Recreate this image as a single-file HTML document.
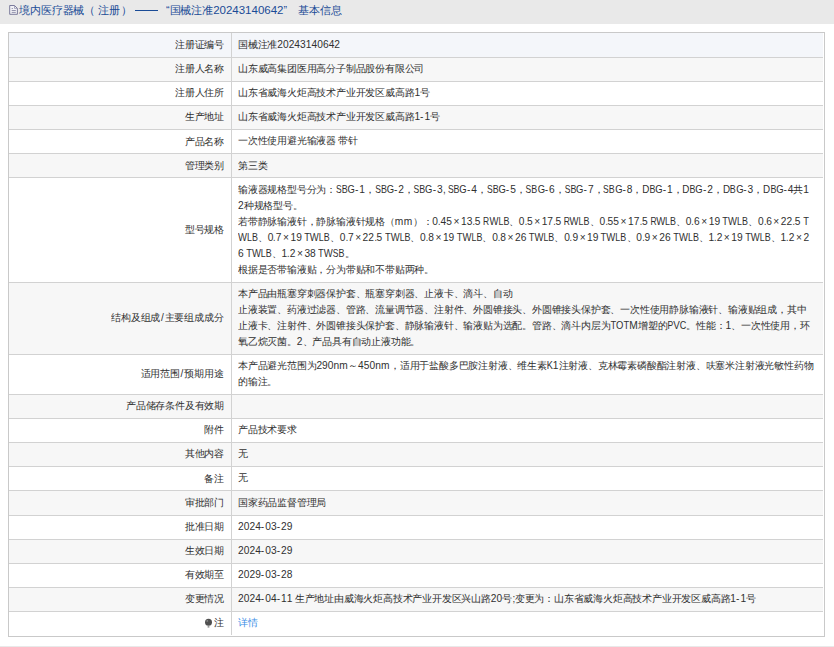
<!DOCTYPE html>
<html><head><meta charset="utf-8"><style>
html,body{margin:0;padding:0;background:#fff;width:834px;height:647px;overflow:hidden;position:relative}
body{font-family:"Liberation Sans",sans-serif;color:#303030}
.hdr{position:absolute;left:0;top:0;width:834px;height:23.5px;background:#e9e9e9}
.ftr{position:absolute;left:0;top:645.8px;width:834px;height:2px;background:#e9e9e9}
.title{position:absolute;top:1px;font-size:12.7px;line-height:23.853px;color:#1a4b96;white-space:nowrap;transform:scale(0.83846);transform-origin:0 0}
.ha{font-size:13.716px}
.doc{position:absolute;left:0;top:0}
.row{position:absolute;left:8.5px;width:814.7px}
.hl{position:absolute;left:8.5px;width:814.7px;height:1px;background:#d2d2d2}
.frame{position:absolute;left:8.0px;top:31.9px;width:814.5px;height:603.1px;border:1px solid #c9c9c9}
.vl{position:absolute;left:231.0px;top:32.4px;width:1px;height:603.1px;background:#d2d2d2}
.lab{position:absolute;right:610.2px;font-size:12.7px;letter-spacing:-1px;line-height:19.763px;white-space:nowrap;color:#303030;transform:scale(0.81667);transform-origin:100% 0}
.val{position:absolute;left:238.3px;font-size:12.7px;letter-spacing:-1px;line-height:19.763px;white-space:nowrap;color:#303030;transform:scale(0.81667);transform-origin:0 0}
.link{color:#3a8ee6}
.a{font-size:12.490px;letter-spacing:0.269px}
.u{font-size:12.490px;letter-spacing:-0.490px}
.l{font-size:12.612px;letter-spacing:0}
.w{letter-spacing:-1.347px}
.x{margin:0 0.918px}
.sl{font-size:12.490px;letter-spacing:0;margin:0 0.980px}
i{font-style:normal;display:inline-block;transform-origin:0 50%;font-size:12.490px;letter-spacing:0;overflow:visible}
.bulb{vertical-align:-1px;margin-right:0.5px}
</style></head><body>
<div class="hdr"></div>
<svg class="doc" width="30" height="24" viewBox="0 0 30 24"><path d="M9.7 5.5H14.5L17.4 8.4V14.3H9.7Z" fill="#f2f2f6" stroke="#6e6e92" stroke-width="0.9"/><path d="M14.5 5.5V8.4H17.4" fill="none" stroke="#8a8aa8" stroke-width="0.7"/><path d="M11.7 8.5H12.9M11.7 10.5H15.8M11.7 12.4H15.8" stroke="#7c7c9c" stroke-width="0.8"/></svg>
<div class="title" style="left:19.1px">境内医疗器械</div><div class="title" style="left:83.8px">（</div><div class="title" style="left:97.6px">注册</div><div class="title" style="left:121.4px">）</div><div style="position:absolute;left:134.6px;top:10px;width:23.8px;height:1.3px;background:#1a4b96"></div><div class="title" style="left:165.8px">“国械注准<span class="ha">20243140642</span>”</div><div class="title" style="left:298px">基本信息</div>
<div class="row" style="top:32.40px;height:24.80px;background:#f4f6fa"></div><div class="lab" style="top:36.73px">注册证编号</div><div class="val" style="top:36.63px">国械注准<i style="width:7px">2</i><i style="width:7px">0</i><i style="width:7px">2</i><i style="width:7px">4</i><i style="width:7px">3</i><i style="width:7px">1</i><i style="width:7px">4</i><i style="width:7px">0</i><i style="width:7px">6</i><i style="width:7px">4</i><i style="width:7px">2</i></div><div class="row" style="top:57.20px;height:24.20px;background:#f7f7f7"></div><div class="lab" style="top:61.23px">注册人名称</div><div class="val" style="top:61.13px">山东威高集团医用高分子制品股份有限公司</div><div class="row" style="top:81.40px;height:24.00px;background:#ffffff"></div><div class="lab" style="top:85.33px">注册人住所</div><div class="val" style="top:85.23px">山东省威海火炬高技术产业开发区威高路<i style="width:7px">1</i>号</div><div class="row" style="top:105.40px;height:24.10px;background:#f7f7f7"></div><div class="lab" style="top:109.38px">生产地址</div><div class="val" style="top:109.28px">山东省威海火炬高技术产业开发区威高路<i style="width:7px">1</i><i style="width:5.3px">-</i><i style="width:7px">1</i>号</div><div class="row" style="top:129.50px;height:24.20px;background:#ffffff"></div><div class="lab" style="top:133.53px">产品名称</div><div class="val" style="top:133.43px">一次性使用避光输液器<i style="width:3px;transform:scaleX(0.864)">&nbsp;</i>带针</div><div class="row" style="top:153.70px;height:24.00px;background:#f7f7f7"></div><div class="lab" style="top:157.63px">管理类别</div><div class="val" style="top:157.53px">第三类</div><div class="row" style="top:177.70px;height:104.90px;background:#ffffff"></div><div class="lab" style="top:222.08px">型号规格</div><div class="val" style="top:181.63px">输液器规格型号分为：<i style="width:7px;transform:scaleX(0.840)">S</i><i style="width:7.3px;transform:scaleX(0.876)">B</i><i style="width:9px;transform:scaleX(0.926)">G</i><i style="width:5.3px">-</i><i style="width:7px">1</i>，<i style="width:7px;transform:scaleX(0.840)">S</i><i style="width:7.3px;transform:scaleX(0.876)">B</i><i style="width:9px;transform:scaleX(0.926)">G</i><i style="width:5.3px">-</i><i style="width:7px">2</i>，<i style="width:7px;transform:scaleX(0.840)">S</i><i style="width:7.3px;transform:scaleX(0.876)">B</i><i style="width:9px;transform:scaleX(0.926)">G</i><i style="width:5.3px">-</i><i style="width:7px">3</i><i style="width:3.3px;transform:scaleX(0.950)">,</i><i style="width:3px;transform:scaleX(0.864)">&nbsp;</i><i style="width:7px;transform:scaleX(0.840)">S</i><i style="width:7.3px;transform:scaleX(0.876)">B</i><i style="width:9px;transform:scaleX(0.926)">G</i><i style="width:5.3px">-</i><i style="width:7px">4</i>，<i style="width:7px;transform:scaleX(0.840)">S</i><i style="width:7.3px;transform:scaleX(0.876)">B</i><i style="width:9px;transform:scaleX(0.926)">G</i><i style="width:5.3px">-</i><i style="width:7px">5</i>，<i style="width:7px;transform:scaleX(0.840)">S</i><i style="width:7.3px;transform:scaleX(0.876)">B</i><i style="width:9px;transform:scaleX(0.926)">G</i><i style="width:5.3px">-</i><i style="width:7px">6</i>，<i style="width:7px;transform:scaleX(0.840)">S</i><i style="width:7.3px;transform:scaleX(0.876)">B</i><i style="width:9px;transform:scaleX(0.926)">G</i><i style="width:5.3px">-</i><i style="width:7px">7</i>，<i style="width:7px;transform:scaleX(0.840)">S</i><i style="width:7.3px;transform:scaleX(0.876)">B</i><i style="width:9px;transform:scaleX(0.926)">G</i><i style="width:5.3px">-</i><i style="width:7px">8</i>，<i style="width:8.7px;transform:scaleX(0.965)">D</i><i style="width:7.3px;transform:scaleX(0.876)">B</i><i style="width:9px;transform:scaleX(0.926)">G</i><i style="width:5.3px">-</i><i style="width:7px">1</i>，<i style="width:8.7px;transform:scaleX(0.965)">D</i><i style="width:7.3px;transform:scaleX(0.876)">B</i><i style="width:9px;transform:scaleX(0.926)">G</i><i style="width:5.3px">-</i><i style="width:7px">2</i>，<i style="width:8.7px;transform:scaleX(0.965)">D</i><i style="width:7.3px;transform:scaleX(0.876)">B</i><i style="width:9px;transform:scaleX(0.926)">G</i><i style="width:5.3px">-</i><i style="width:7px">3</i>，<i style="width:8.7px;transform:scaleX(0.965)">D</i><i style="width:7.3px;transform:scaleX(0.876)">B</i><i style="width:9px;transform:scaleX(0.926)">G</i><i style="width:5.3px">-</i><i style="width:7px">4</i>共<i style="width:7px">1</i></div><div class="val" style="top:197.77px"><i style="width:7px">2</i>种规格型号。</div><div class="val" style="top:213.91px">若带静脉输液针，静脉输液针规格（<i style="width:11px">m</i><i style="width:11px">m</i>）：<i style="width:7px">0</i><i style="width:3px;transform:scaleX(0.864)">.</i><i style="width:7px">4</i><i style="width:7px">5</i><i style="width:11px;text-align:center">×</i><i style="width:7px">1</i><i style="width:7px">3</i><i style="width:3px;transform:scaleX(0.864)">.</i><i style="width:7px">5</i><i style="width:3px;transform:scaleX(0.864)">&nbsp;</i><i style="width:7.5px;transform:scaleX(0.832)">R</i><i style="width:11px;transform:scaleX(0.933)">W</i><i style="width:6px;transform:scaleX(0.864)">L</i><i style="width:7.3px;transform:scaleX(0.876)">B</i>、<i style="width:7px">0</i><i style="width:3px;transform:scaleX(0.864)">.</i><i style="width:7px">5</i><i style="width:11px;text-align:center">×</i><i style="width:7px">1</i><i style="width:7px">7</i><i style="width:3px;transform:scaleX(0.864)">.</i><i style="width:7px">5</i><i style="width:3px;transform:scaleX(0.864)">&nbsp;</i><i style="width:7.5px;transform:scaleX(0.832)">R</i><i style="width:11px;transform:scaleX(0.933)">W</i><i style="width:6px;transform:scaleX(0.864)">L</i><i style="width:7.3px;transform:scaleX(0.876)">B</i>、<i style="width:7px">0</i><i style="width:3px;transform:scaleX(0.864)">.</i><i style="width:7px">5</i><i style="width:7px">5</i><i style="width:11px;text-align:center">×</i><i style="width:7px">1</i><i style="width:7px">7</i><i style="width:3px;transform:scaleX(0.864)">.</i><i style="width:7px">5</i><i style="width:3px;transform:scaleX(0.864)">&nbsp;</i><i style="width:7.5px;transform:scaleX(0.832)">R</i><i style="width:11px;transform:scaleX(0.933)">W</i><i style="width:6px;transform:scaleX(0.864)">L</i><i style="width:7.3px;transform:scaleX(0.876)">B</i>、<i style="width:7px">0</i><i style="width:3px;transform:scaleX(0.864)">.</i><i style="width:7px">6</i><i style="width:11px;text-align:center">×</i><i style="width:7px">1</i><i style="width:7px">9</i><i style="width:3px;transform:scaleX(0.864)">&nbsp;</i><i style="width:7px;transform:scaleX(0.917)">T</i><i style="width:11px;transform:scaleX(0.933)">W</i><i style="width:6px;transform:scaleX(0.864)">L</i><i style="width:7.3px;transform:scaleX(0.876)">B</i>、<i style="width:7px">0</i><i style="width:3px;transform:scaleX(0.864)">.</i><i style="width:7px">6</i><i style="width:11px;text-align:center">×</i><i style="width:7px">2</i><i style="width:7px">2</i><i style="width:3px;transform:scaleX(0.864)">.</i><i style="width:7px">5</i><i style="width:3px;transform:scaleX(0.864)">&nbsp;</i><i style="width:7px;transform:scaleX(0.917)">T</i></div><div class="val" style="top:230.05px"><i style="width:11px;transform:scaleX(0.933)">W</i><i style="width:6px;transform:scaleX(0.864)">L</i><i style="width:7.3px;transform:scaleX(0.876)">B</i>、<i style="width:7px">0</i><i style="width:3px;transform:scaleX(0.864)">.</i><i style="width:7px">7</i><i style="width:11px;text-align:center">×</i><i style="width:7px">1</i><i style="width:7px">9</i><i style="width:3px;transform:scaleX(0.864)">&nbsp;</i><i style="width:7px;transform:scaleX(0.917)">T</i><i style="width:11px;transform:scaleX(0.933)">W</i><i style="width:6px;transform:scaleX(0.864)">L</i><i style="width:7.3px;transform:scaleX(0.876)">B</i>、<i style="width:7px">0</i><i style="width:3px;transform:scaleX(0.864)">.</i><i style="width:7px">7</i><i style="width:11px;text-align:center">×</i><i style="width:7px">2</i><i style="width:7px">2</i><i style="width:3px;transform:scaleX(0.864)">.</i><i style="width:7px">5</i><i style="width:3px;transform:scaleX(0.864)">&nbsp;</i><i style="width:7px;transform:scaleX(0.917)">T</i><i style="width:11px;transform:scaleX(0.933)">W</i><i style="width:6px;transform:scaleX(0.864)">L</i><i style="width:7.3px;transform:scaleX(0.876)">B</i>、<i style="width:7px">0</i><i style="width:3px;transform:scaleX(0.864)">.</i><i style="width:7px">8</i><i style="width:11px;text-align:center">×</i><i style="width:7px">1</i><i style="width:7px">9</i><i style="width:3px;transform:scaleX(0.864)">&nbsp;</i><i style="width:7px;transform:scaleX(0.917)">T</i><i style="width:11px;transform:scaleX(0.933)">W</i><i style="width:6px;transform:scaleX(0.864)">L</i><i style="width:7.3px;transform:scaleX(0.876)">B</i>、<i style="width:7px">0</i><i style="width:3px;transform:scaleX(0.864)">.</i><i style="width:7px">8</i><i style="width:11px;text-align:center">×</i><i style="width:7px">2</i><i style="width:7px">6</i><i style="width:3px;transform:scaleX(0.864)">&nbsp;</i><i style="width:7px;transform:scaleX(0.917)">T</i><i style="width:11px;transform:scaleX(0.933)">W</i><i style="width:6px;transform:scaleX(0.864)">L</i><i style="width:7.3px;transform:scaleX(0.876)">B</i>、<i style="width:7px">0</i><i style="width:3px;transform:scaleX(0.864)">.</i><i style="width:7px">9</i><i style="width:11px;text-align:center">×</i><i style="width:7px">1</i><i style="width:7px">9</i><i style="width:3px;transform:scaleX(0.864)">&nbsp;</i><i style="width:7px;transform:scaleX(0.917)">T</i><i style="width:11px;transform:scaleX(0.933)">W</i><i style="width:6px;transform:scaleX(0.864)">L</i><i style="width:7.3px;transform:scaleX(0.876)">B</i>、<i style="width:7px">0</i><i style="width:3px;transform:scaleX(0.864)">.</i><i style="width:7px">9</i><i style="width:11px;text-align:center">×</i><i style="width:7px">2</i><i style="width:7px">6</i><i style="width:3px;transform:scaleX(0.864)">&nbsp;</i><i style="width:7px;transform:scaleX(0.917)">T</i><i style="width:11px;transform:scaleX(0.933)">W</i><i style="width:6px;transform:scaleX(0.864)">L</i><i style="width:7.3px;transform:scaleX(0.876)">B</i>、<i style="width:7px">1</i><i style="width:3px;transform:scaleX(0.864)">.</i><i style="width:7px">2</i><i style="width:11px;text-align:center">×</i><i style="width:7px">1</i><i style="width:7px">9</i><i style="width:3px;transform:scaleX(0.864)">&nbsp;</i><i style="width:7px;transform:scaleX(0.917)">T</i><i style="width:11px;transform:scaleX(0.933)">W</i><i style="width:6px;transform:scaleX(0.864)">L</i><i style="width:7.3px;transform:scaleX(0.876)">B</i>、<i style="width:7px">1</i><i style="width:3px;transform:scaleX(0.864)">.</i><i style="width:7px">2</i><i style="width:11px;text-align:center">×</i><i style="width:7px">2</i></div><div class="val" style="top:246.19px"><i style="width:7px">6</i><i style="width:3px;transform:scaleX(0.864)">&nbsp;</i><i style="width:7px;transform:scaleX(0.917)">T</i><i style="width:11px;transform:scaleX(0.933)">W</i><i style="width:6px;transform:scaleX(0.864)">L</i><i style="width:7.3px;transform:scaleX(0.876)">B</i>、<i style="width:7px">1</i><i style="width:3px;transform:scaleX(0.864)">.</i><i style="width:7px">2</i><i style="width:11px;text-align:center">×</i><i style="width:7px">3</i><i style="width:7px">8</i><i style="width:3px;transform:scaleX(0.864)">&nbsp;</i><i style="width:7px;transform:scaleX(0.917)">T</i><i style="width:11px;transform:scaleX(0.933)">W</i><i style="width:7px;transform:scaleX(0.840)">S</i><i style="width:7.3px;transform:scaleX(0.876)">B</i>。</div><div class="val" style="top:262.33px">根据是否带输液贴，分为带贴和不带贴两种。</div><div class="row" style="top:282.60px;height:71.60px;background:#f7f7f7"></div><div class="lab" style="top:310.33px">结构及组成<span class="sl">/</span>主要组成成分</div><div class="val" style="top:286.02px">本产品由瓶塞穿刺器保护套、瓶塞穿刺器、止液卡、滴斗、自动</div><div class="val" style="top:302.16px">止液装置、药液过滤器、管路、流量调节器、注射件、外圆锥接头、外圆锥接头保护套、一次性使用静脉输液针、输液贴组成，其中</div><div class="val" style="top:318.30px">止液卡、注射件、外圆锥接头保护套、静脉输液针、输液贴为选配。管路、滴斗内层为<i style="width:7px;transform:scaleX(0.917)">T</i><i style="width:9px;transform:scaleX(0.926)">O</i><i style="width:7px;transform:scaleX(0.917)">T</i><i style="width:11px">M</i>增塑的<i style="width:7px;transform:scaleX(0.840)">P</i><i style="width:8px;transform:scaleX(0.960)">V</i><i style="width:8px;transform:scaleX(0.887)">C</i>。性能：<i style="width:7px">1</i>、一次性使用，环</div><div class="val" style="top:334.44px">氧乙烷灭菌。<i style="width:7px">2</i>、产品具有自动止液功能。</div><div class="row" style="top:354.20px;height:40.10px;background:#ffffff"></div><div class="lab" style="top:366.18px">适用范围<span class="sl">/</span>预期用途</div><div class="val" style="top:358.01px">本产品避光范围为<i style="width:7px">2</i><i style="width:7px">9</i><i style="width:7px">0</i><i style="width:7px">n</i><i style="width:11px">m</i>～<i style="width:7px">4</i><i style="width:7px">5</i><i style="width:7px">0</i><i style="width:7px">n</i><i style="width:11px">m</i>，适用于盐酸多巴胺注射液、维生素<i style="width:7.5px;transform:scaleX(0.900)">K</i><i style="width:7px">1</i>注射液、克林霉素磷酸酯注射液、呋塞米注射液光敏性药物</div><div class="val" style="top:374.15px">的输注。</div><div class="row" style="top:394.30px;height:23.80px;background:#f7f7f7"></div><div class="lab" style="top:398.13px">产品储存条件及有效期</div><div class="val" style="top:398.03px"></div><div class="row" style="top:418.10px;height:24.10px;background:#ffffff"></div><div class="lab" style="top:422.08px">附件</div><div class="val" style="top:421.98px">产品技术要求</div><div class="row" style="top:442.20px;height:24.20px;background:#f7f7f7"></div><div class="lab" style="top:446.23px">其他内容</div><div class="val" style="top:446.13px">无</div><div class="row" style="top:466.40px;height:24.50px;background:#ffffff"></div><div class="lab" style="top:470.58px">备注</div><div class="val" style="top:470.48px">无</div><div class="row" style="top:490.90px;height:24.20px;background:#f7f7f7"></div><div class="lab" style="top:494.93px">审批部门</div><div class="val" style="top:494.83px">国家药品监督管理局</div><div class="row" style="top:515.10px;height:24.20px;background:#ffffff"></div><div class="lab" style="top:519.13px">批准日期</div><div class="val" style="top:519.03px"><i style="width:7px">2</i><i style="width:7px">0</i><i style="width:7px">2</i><i style="width:7px">4</i><i style="width:5.3px">-</i><i style="width:7px">0</i><i style="width:7px">3</i><i style="width:5.3px">-</i><i style="width:7px">2</i><i style="width:7px">9</i></div><div class="row" style="top:539.30px;height:24.10px;background:#f7f7f7"></div><div class="lab" style="top:543.28px">生效日期</div><div class="val" style="top:543.18px"><i style="width:7px">2</i><i style="width:7px">0</i><i style="width:7px">2</i><i style="width:7px">4</i><i style="width:5.3px">-</i><i style="width:7px">0</i><i style="width:7px">3</i><i style="width:5.3px">-</i><i style="width:7px">2</i><i style="width:7px">9</i></div><div class="row" style="top:563.40px;height:24.20px;background:#ffffff"></div><div class="lab" style="top:567.43px">有效期至</div><div class="val" style="top:567.33px"><i style="width:7px">2</i><i style="width:7px">0</i><i style="width:7px">2</i><i style="width:7px">9</i><i style="width:5.3px">-</i><i style="width:7px">0</i><i style="width:7px">3</i><i style="width:5.3px">-</i><i style="width:7px">2</i><i style="width:7px">8</i></div><div class="row" style="top:587.60px;height:23.80px;background:#f7f7f7"></div><div class="lab" style="top:591.43px">变更情况</div><div class="val" style="top:591.33px"><i style="width:7px">2</i><i style="width:7px">0</i><i style="width:7px">2</i><i style="width:7px">4</i><i style="width:5.3px">-</i><i style="width:7px">0</i><i style="width:7px">4</i><i style="width:5.3px">-</i><i style="width:7px">1</i><i style="width:7px">1</i><i style="width:3px;transform:scaleX(0.864)">&nbsp;</i>生产地址由威海火炬高技术产业开发区兴山路<i style="width:7px">2</i><i style="width:7px">0</i>号<i style="width:3.3px;transform:scaleX(0.950)">;</i>变更为：山东省威海火炬高技术产业开发区威高路<i style="width:7px">1</i><i style="width:5.3px">-</i><i style="width:7px">1</i>号</div><div class="row" style="top:611.40px;height:24.10px;background:#ffffff"></div><div class="lab" style="top:615.38px">注</div><div class="val link" style="top:615.28px">详情</div><div class="hl" style="top:56.70px"></div><div class="hl" style="top:80.90px"></div><div class="hl" style="top:104.90px"></div><div class="hl" style="top:129.00px"></div><div class="hl" style="top:153.20px"></div><div class="hl" style="top:177.20px"></div><div class="hl" style="top:282.10px"></div><div class="hl" style="top:353.70px"></div><div class="hl" style="top:393.80px"></div><div class="hl" style="top:417.60px"></div><div class="hl" style="top:441.70px"></div><div class="hl" style="top:465.90px"></div><div class="hl" style="top:490.40px"></div><div class="hl" style="top:514.60px"></div><div class="hl" style="top:538.80px"></div><div class="hl" style="top:562.90px"></div><div class="hl" style="top:587.10px"></div><div class="hl" style="top:610.90px"></div>
<div class="vl"></div><svg style="position:absolute;left:200px;top:612px" width="20" height="20" viewBox="200 612 20 20"><circle cx="208.5" cy="622.3" r="3.5" fill="#505050"/><circle cx="207.3" cy="620.9" r="0.9" fill="#8a8a8a"/><rect x="207.6" y="626.1" width="1.8" height="1.5" fill="#8f8f8f"/></svg>
<div class="frame"></div>
<div class="ftr"></div>
</body></html>
